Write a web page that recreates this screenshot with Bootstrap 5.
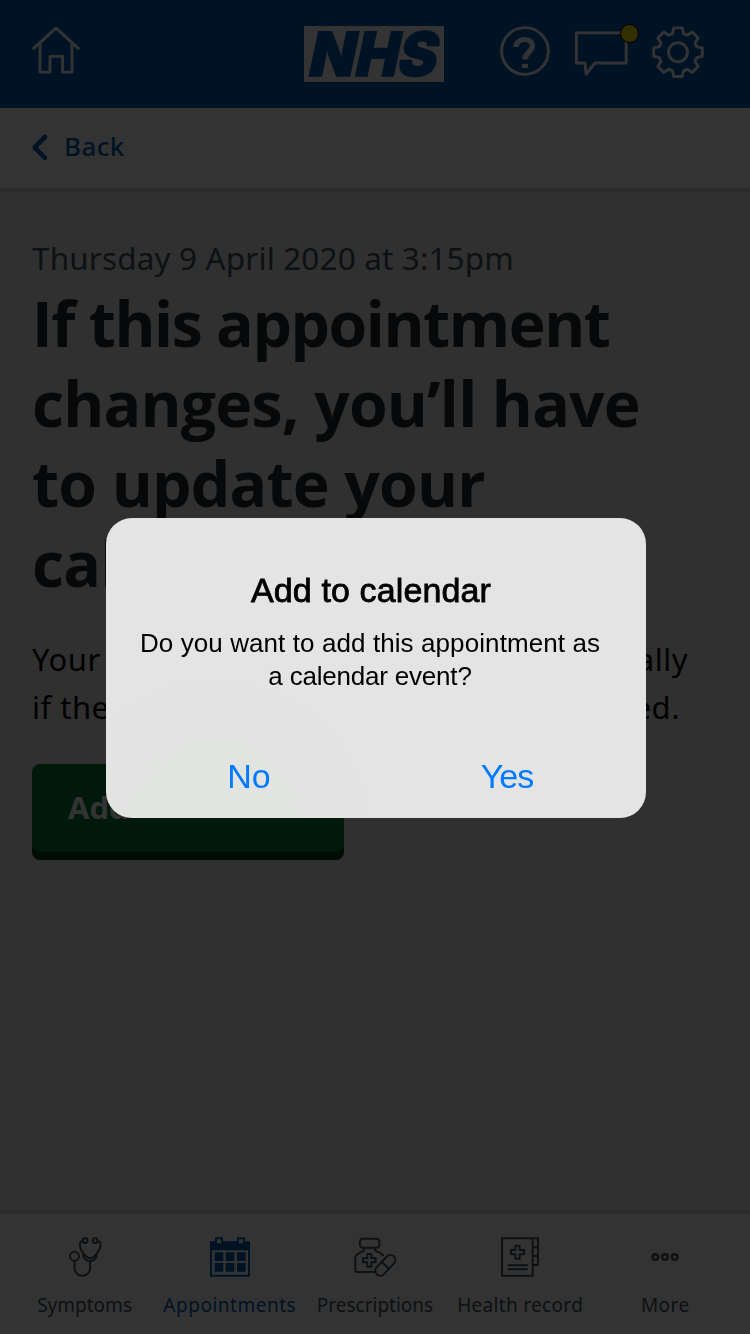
<!DOCTYPE html>
<html lang="en">
<head>
<meta charset="utf-8">
<meta name="viewport" content="width=device-width, initial-scale=1">
<title>Add to calendar</title>
<link href="https://cdn.jsdelivr.net/npm/bootstrap@5.3.0/dist/css/bootstrap.min.css" rel="stylesheet">
<style>
body{font-family:"Noto Sans","Open Sans",sans-serif;background:#f0f1f1;color:#212b32;height:1334px;overflow:hidden}
svg{display:block;flex:none;overflow:visible;fill:none;stroke-linecap:round;stroke-linejoin:round}
.topbar{height:108px;background:#005eb8;padding:26px 0 0 32px}
.topbar svg{stroke:#fff;stroke-width:2.9}
.topbar .logo{background:#fff;stroke:none;margin:0 56px 0 224px}
.logo text{font:900 61px Inter,"Liberation Sans",sans-serif;fill:#005eb8;stroke:#005eb8;stroke-width:1.4;stroke-linejoin:miter}
.chat{width:66px;margin:0 12px 0 24px}
.dot{left:46px;top:-2px;width:19px;height:19px;background:#ffeb00;border:1.5px solid #000}
.backbar{height:84px;border-bottom:4px solid #d8dde0;padding:0 32px 3px}
.backbar a{color:#005eb8;font-size:26px;letter-spacing:.4px;gap:16px;font-weight:500}
.page{padding:42px 32px 0;height:1018px}
.when{font-size:31.5px;line-height:48px;color:#425563;letter-spacing:.13px}
h1{font-family:"Open Sans","Noto Sans",sans-serif;font-size:62.5px;line-height:80px;font-weight:700;letter-spacing:-.8px;padding-top:1px}
.tight{letter-spacing:-1.45px}
.info{font-size:31px;line-height:48px;letter-spacing:.5px;margin:32px 0 33px}
.info .l1{width:656px}
.info .l2{width:648px}
.go{width:312px;height:88px;padding:0 0 2px 36px;background:#007f3b;color:#fff;font-family:"Open Sans",sans-serif;font-size:31px;font-weight:700;border:0;border-radius:8px;box-shadow:0 8px 0 #00401e}
.go:hover{background:#007f3b;color:#fff}
.tabs{height:124px;border-top:4px solid #d8dde0;padding:18px 0 0 12px}
.tabs a{width:145.2px;font-size:19px;line-height:24px;color:#425563;gap:11px}
.tabs svg{stroke:#425563;stroke-width:6}
.tabs a.on{color:#005eb8}
.tabs .on svg{stroke:#005eb8}
.modal-backdrop{--bs-backdrop-opacity:.8}
.modal{padding:1px 0 0 2px}
.modal-dialog{max-width:540px;min-height:1334px}
.ask{height:300px;border:0;border-radius:26px;font-family:"Liberation Sans",Arial,sans-serif;color:#000;background:radial-gradient(circle at 20% 105%,#e1e4e1 0,#e4e4e4 45%)}
.ask h2{font-size:34px;line-height:40px;font-weight:400;margin:52px 10px 0 0;-webkit-text-stroke:.8px #000;letter-spacing:.12px}
.ask p{font-size:26px;line-height:33px;margin:17px 12px 0 0;letter-spacing:.09px}
.acts{margin-top:63px;padding-left:14px}
.acts button{color:#007aff;width:258px;font-size:34px;line-height:40px;border:0}
</style>
</head>
<body class="d-flex flex-column">
<header class="topbar d-flex align-items-start">
  <svg width="48" height="50" viewBox="32 26 48 50"><path d="M33.6 48.4 56 28.2l22.4 20.2M40 43.5v28.6h10V56.4h12.6v15.7H72V43.5"/></svg>
  <svg class="logo" width="140" height="56" viewBox="304 26 140 56"><g transform="translate(306.5 76) skewX(-12)"><text x="0" textLength="46" lengthAdjust="spacingAndGlyphs">N</text><text x="46.5" textLength="43" lengthAdjust="spacingAndGlyphs">H</text><text x="89" textLength="39" lengthAdjust="spacingAndGlyphs">S</text></g></svg>
  <svg width="50" height="52" viewBox="500 26 50 52"><circle cx="525" cy="51" r="23.4"/><path d="M516 47c.2-9.6 16.2-10 16.4-1.2 0 6.2-7.6 6.8-7.6 13.8" stroke-width="5.2" stroke-linecap="butt"/><path d="M522 66h6" stroke-width="4.2" stroke-linecap="butt"/></svg>
  <div class="chat position-relative"><svg width="66" height="52" viewBox="574 26 66 52"><path d="M576.4 32.9h49.8V63h-31.4l-8.6 11-1.2-11h-8.6z"/></svg><span class="dot position-absolute rounded-circle"></span></div>
  <svg width="52" height="54" viewBox="652 26 52 54"><g transform="translate(678 52.2)"><circle r="9.5"/><path d="M-5.5-18.6-4.2-24.3H4.2L5.5-18.6 9.3-17 14.2-20.2 20.2-14.2 17-9.3 18.6-5.5 24.3-4.2V4.2L18.6 5.5 17 9.3 20.2 14.2 14.2 20.2 9.3 17 5.5 18.6 4.2 24.3H-4.2L-5.5 18.6-9.3 17-14.2 20.2-20.2 14.2-17 9.3-18.6 5.5-24.3 4.2V-4.2L-18.6-5.5-17-9.3-20.2-14.2-14.2-20.2-9.3-17z"/></g></svg>
</header>
<nav class="backbar d-flex align-items-center bg-white">
  <a href="#" class="d-flex align-items-center text-decoration-none"><svg width="16" height="24" viewBox="0 0 16 24" stroke="#005eb8" stroke-width="4.6" stroke-linecap="butt"><path d="M13 2 2.6 12.4 13 22.8"/></svg>Back</a>
</nav>
<main class="page text-nowrap">
  <div class="when">Thursday 9 April 2020 at 3:15pm</div>
  <h1 class="m-0"><span class="tight">If this appointment</span><br>changes, you’ll have<br>to update your<br>cal</h1>
  <div class="info text-black">
    <div class="l1 d-flex justify-content-between"><span>Your</span><span>ally</span></div>
    <div class="l2 d-flex justify-content-between"><span>if the</span><span>ed.</span></div>
  </div>
  <button class="go btn text-start">Add</button>
</main>
<nav class="tabs d-flex bg-white text-center">
  <a href="#" class="d-flex flex-column align-items-center text-decoration-none"><svg width="50" height="50" viewBox="178.5 96 150 150"><circle cx="222" cy="169" r="13.5"/><path d="M222 183v20c0 32 47 32 47 0v-18"/><circle cx="254" cy="122" r="7"/><circle cx="284" cy="122" r="7"/><path d="M247 122c-14 4-11 21 2 39 8 11 18 14 20 14s12-3 20-14c13-18 16-35 2-39M248 162c-2 28 44 28 41 0"/></svg>Symptoms</a>
  <a href="#" class="on d-flex flex-column align-items-center text-decoration-none"><svg width="50" height="50" viewBox="165 96 150 150"><path d="M183 127h114v100H183z" stroke-width="6"/><path d="M180 125h120v26H180z" fill="#005eb8" stroke="none"/><path d="M198 115h18v18h-18zM264 115h18v18h-18z" stroke-width="6" fill="#fff"/><path d="M194 157h26v26h-26zm33 0h26v26h-26zm34 0h26v26h-26zm-67 32h26v26h-26zm33 0h26v26h-26zm34 0h26v26h-26z" fill="#005eb8" stroke="none"/></svg><span style="letter-spacing:.52px">Appointments</span></a>
  <a href="#" class="d-flex flex-column align-items-center text-decoration-none"><svg width="50" height="50" viewBox="150 96 150 150"><rect x="180" y="116" width="58" height="27" rx="9"/><path d="M193 144v6c-9 8-27 11-27 23v38q0 5 5 5h56M225 144v6c7 6 19 9 24 16"/><path d="M202 162h12v13h13v12h-13v13h-12v-13h-13v-12h13z"/><g transform="rotate(-47 256 196)"><rect x="219" y="181" width="74" height="30" rx="15"/><path d="M256 181v30"/></g></svg>Prescriptions</a>
  <a href="#" class="d-flex flex-column align-items-center text-decoration-none"><svg width="50" height="50" viewBox="135 96 150 150"><path d="M156 115h92v112h-92zM248 115h16v80h-16M248 142h16M248 168h16M175 196h56M175 208h56"/><path d="M196 137h13v13h13v13h-13v13h-13v-13h-13v-13h13z"/></svg><span style="letter-spacing:.32px">Health record</span></a>
  <a href="#" class="d-flex flex-column align-items-center text-decoration-none"><svg width="50" height="50" viewBox="120 96 150 150" style="stroke-width:7.5"><circle cx="166" cy="171" r="8.5"/><circle cx="195" cy="171" r="8.5"/><circle cx="224" cy="171" r="8.5"/></svg><span style="letter-spacing:.5px">More</span></a>
</nav>
<div class="modal-backdrop show"></div>
<div class="modal d-block overflow-hidden" role="dialog" tabindex="-1">
  <div class="modal-dialog modal-dialog-centered my-0">
    <div class="ask modal-content text-center">
      <h2>Add to calendar</h2>
      <p>Do you want to add this appointment as<br><span style="letter-spacing:-.2px">a calendar event?</span></p>
      <div class="acts d-flex"><button class="btn p-0">No</button><button class="btn p-0" style="letter-spacing:-1px">Yes</button></div>
    </div>
  </div>
</div>
<script src="https://cdn.jsdelivr.net/npm/bootstrap@5.3.0/dist/js/bootstrap.bundle.min.js"></script>
</body>
</html>
